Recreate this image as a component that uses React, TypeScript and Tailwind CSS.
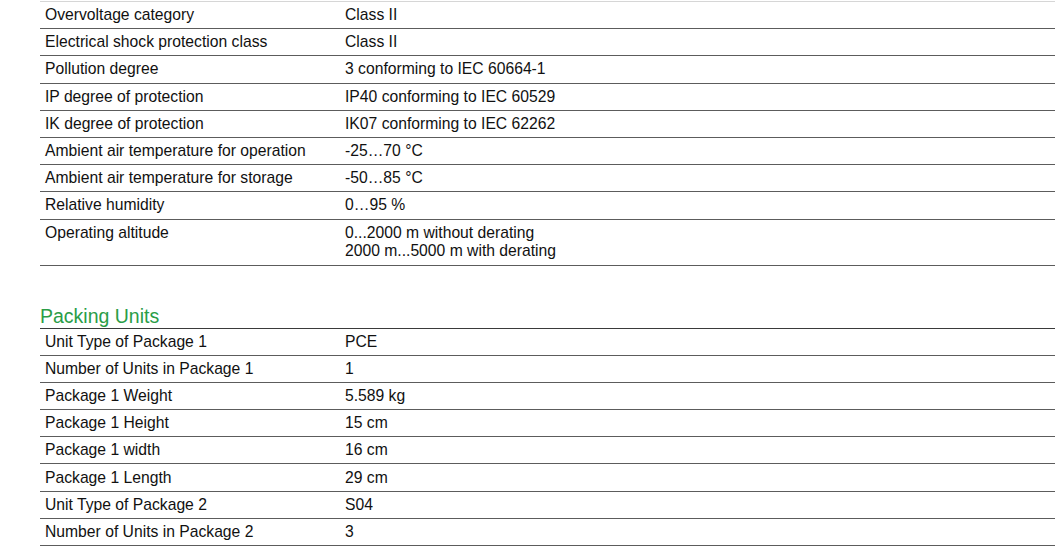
import React from 'react';

type Row = { label: string; value: string[] };

const ENVIRONMENT: Row[] = [
  { label: 'Overvoltage category', value: ['Class II'] },
  { label: 'Electrical shock protection class', value: ['Class II'] },
  { label: 'Pollution degree', value: ['3 conforming to IEC 60664-1'] },
  { label: 'IP degree of protection', value: ['IP40 conforming to IEC 60529'] },
  { label: 'IK degree of protection', value: ['IK07 conforming to IEC 62262'] },
  { label: 'Ambient air temperature for operation', value: ['-25…70 °C'] },
  { label: 'Ambient air temperature for storage', value: ['-50…85 °C'] },
  { label: 'Relative humidity', value: ['0…95 %'] },
  { label: 'Operating altitude', value: ['0...2000 m without derating', '2000 m...5000 m with derating'] },
];

const PACKING: Row[] = [
  { label: 'Unit Type of Package 1', value: ['PCE'] },
  { label: 'Number of Units in Package 1', value: ['1'] },
  { label: 'Package 1 Weight', value: ['5.589 kg'] },
  { label: 'Package 1 Height', value: ['15 cm'] },
  { label: 'Package 1 width', value: ['16 cm'] },
  { label: 'Package 1 Length', value: ['29 cm'] },
  { label: 'Unit Type of Package 2', value: ['S04'] },
  { label: 'Number of Units in Package 2', value: ['3'] },
];

function SpecRow({ row }: { row: Row }) {
  const tall = row.value.length > 1;
  return (
    <div
      className={`grid grid-cols-[300px_1fr] border-b border-[#5c5c5c] px-[5px] text-[15.7px] leading-[18px] text-[#111111] ${
        tall ? 'h-[46px] pt-[4px]' : 'h-[27.2px] items-center'
      }`}
    >
      <div>{row.label}</div>
      <div>
        {row.value.map((v) => (
          <div key={v}>{v}</div>
        ))}
      </div>
    </div>
  );
}

export default function App() {
  return (
    <div className="h-[547px] w-[1060px] overflow-hidden bg-white pl-[40px] pr-[5px] font-['Liberation_Sans',Arial,sans-serif]">
      {/* Environment table, cut at the top */}
      <div className="border-t border-[#d6d6d6] mt-[1px]">
        {ENVIRONMENT.map((r) => (
          <SpecRow key={r.label} row={r} />
        ))}
      </div>

      {/* Packing Units */}
      <h2 className="mt-[39px] text-[19.5px] leading-[22px] text-[#2a9d47]">Packing Units</h2>
      <div className="border-t border-[#3a3a3a] mt-[1px]">
        {PACKING.map((r) => (
          <SpecRow key={r.label} row={r} />
        ))}
      </div>
    </div>
  );
}
